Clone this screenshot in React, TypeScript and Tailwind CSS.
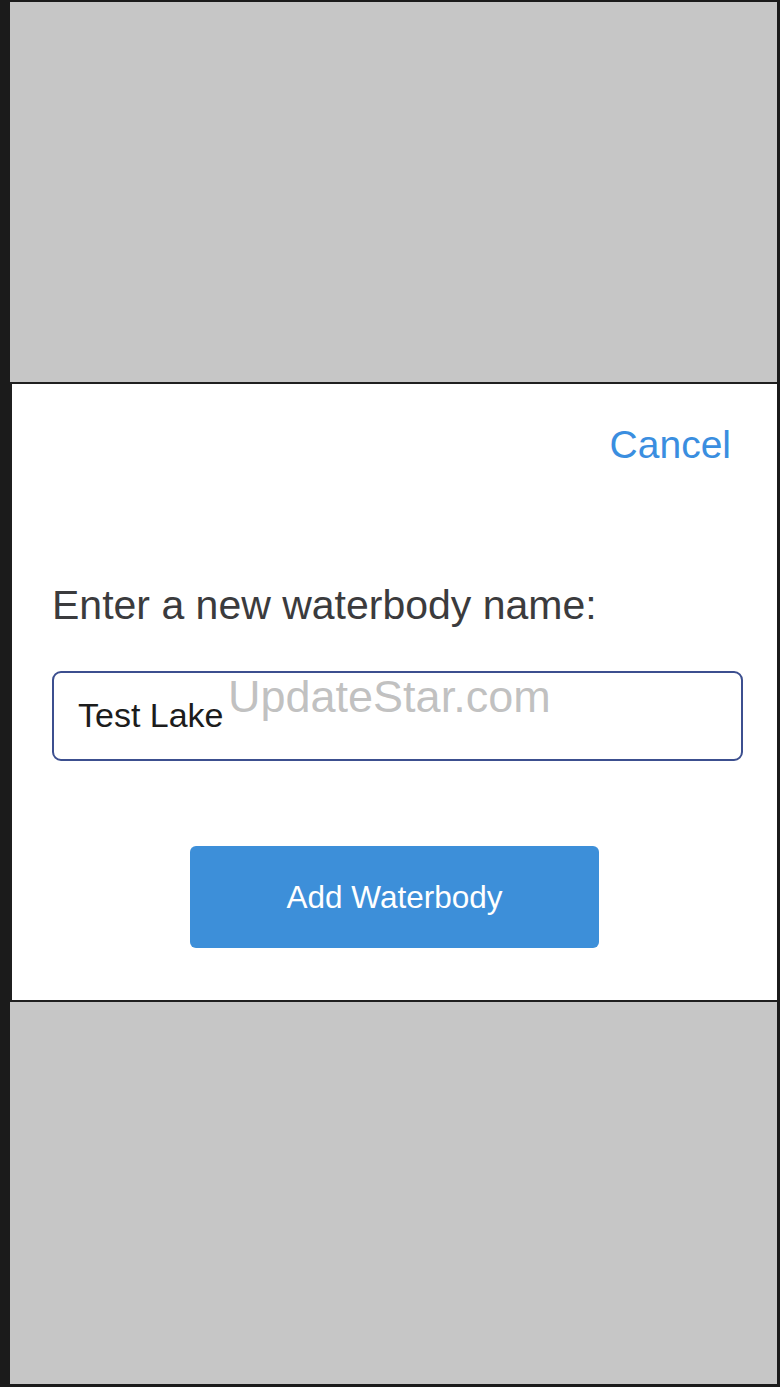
export default function App() {
  return (
    <div
      className="w-[780px] h-[1387px] bg-[#1b1b1b] pt-[2px] pl-[10px] pr-[3px] pb-[3px] flex flex-col"
      style={{ fontFamily: '"Liberation Sans", Arial, sans-serif' }}
    >
      {/* backdrop top */}
      <div className="h-[380px] bg-[#c6c6c6]" />

      {/* modal */}
      <div className="relative bg-white border-t-2 border-b-2 border-l-2 border-[#1f1f1f] flex flex-col pt-[41px] pb-[52px]">
        <div className="flex justify-end pr-[46px]">
          <button className="text-[39px] leading-none text-[#3a8ee0]">Cancel</button>
        </div>

        <div className="pl-[40px] pr-[34px] pt-[121px] flex flex-col">
          <p className="text-[41px] leading-none text-[#3b3b3d]">Enter a new waterbody name:</p>
          <div className="mt-[45px] h-[90px] border-2 border-[#3c4f8f] rounded-[9px] flex items-center pl-[24px]">
            <span className="text-[34px] leading-none text-[#1c1c1c] -mt-[2px]">Test Lake</span>
          </div>
        </div>

        <div className="flex justify-center pt-[85px]">
          <button className="w-[409px] h-[102px] rounded-[6px] bg-[#3d8fd9] text-white text-[31.5px] leading-none pt-[2px]">
            Add Waterbody
          </button>
        </div>

        {/* watermark */}
        <span className="absolute left-[216px] top-[290px] text-[45px] leading-none text-[#a6a6a6]/70 pointer-events-none">
          UpdateStar.com
        </span>
      </div>

      {/* backdrop bottom */}
      <div className="flex-1 bg-[#c6c6c6]" />
    </div>
  );
}
